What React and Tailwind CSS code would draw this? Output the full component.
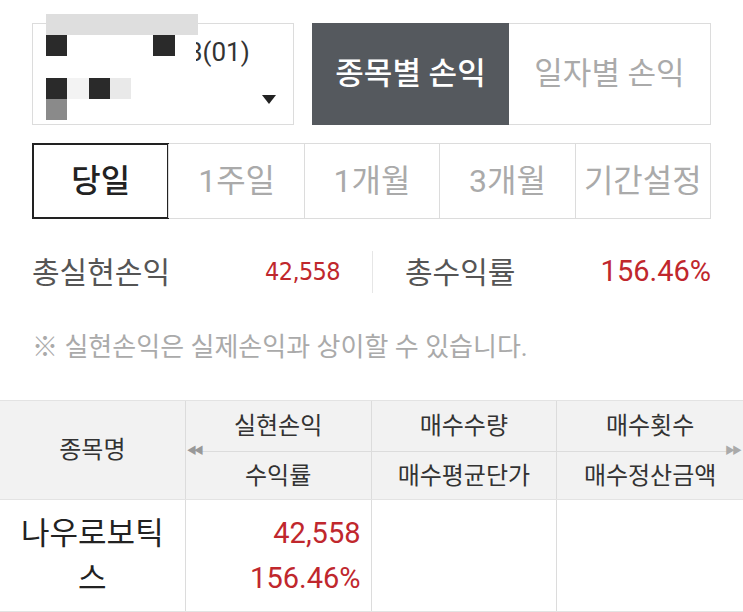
import { useState } from "react";

const font = { fontFamily: 'Roboto, "Noto Sans CJK KR", sans-serif' };

const periods = ["당일", "1주일", "1개월", "3개월", "기간설정"];

function AccountSelect() {
  return (
    <div className="relative w-[262px] h-[102px] border border-[#dcdcdc] bg-white shrink-0">
      <div className="pl-[155px] pt-[13px] text-[26px] leading-[30px] text-[#333]">3(01)</div>
      {/* 가려진 계좌번호 */}
      <div className="absolute left-[141px] top-[8px] w-[22px] h-[34px] bg-white" />
      <div className="absolute left-[13px] top-[-10px] w-[152px] h-[21px] bg-[#dedede]" />
      <div className="absolute left-[13px] top-[11px] w-[21px] h-[21px] bg-[#2a2a2a]" />
      <div className="absolute left-[120px] top-[11px] w-[22px] h-[21px] bg-[#2a2a2a]" />
      <div className="absolute left-[13px] top-[54px] w-[21px] h-[21px] bg-[#2a2a2a]" />
      <div className="absolute left-[34px] top-[54px] w-[22px] h-[21px] bg-[#f3f3f3]" />
      <div className="absolute left-[56px] top-[54px] w-[21px] h-[21px] bg-[#2a2a2a]" />
      <div className="absolute left-[77px] top-[54px] w-[21px] h-[21px] bg-[#e9e9e9]" />
      <div className="absolute left-[13px] top-[75px] w-[21px] h-[21px] bg-[#8a8a8a]" />
      <div className="absolute left-[229px] top-[71px] w-0 h-0 border-l-[7px] border-r-[7px] border-t-[9px] border-l-transparent border-r-transparent border-t-[#222]" />
    </div>
  );
}

export default function App() {
  const [view, setView] = useState("stock");
  const [period, setPeriod] = useState("당일");

  return (
    <div className="w-[743px] h-[612px] bg-white overflow-hidden" style={font}>
      <div className="px-[32px] pt-[23px]">
        <div className="flex gap-[18px]">
          <AccountSelect />
          <div className="flex flex-1 h-[102px]">
            <button
              onClick={() => setView("stock")}
              className={`w-[197px] text-[31px] ${view === "stock" ? "bg-[#55595e] text-white font-medium" : "bg-white text-[#aaa] border border-[#dcdcdc]"}`}
            >
              종목별 손익
            </button>
            <button
              onClick={() => setView("day")}
              className={`flex-1 text-[31px] ${view === "day" ? "bg-[#55595e] text-white font-medium" : "bg-white text-[#aaa] border border-[#dcdcdc] border-l-0"}`}
            >
              일자별 손익
            </button>
          </div>
        </div>

        <div className="grid grid-cols-5 h-[76px] mt-[18px] border border-[#dcdcdc]">
          {periods.map((p, i) => (
            <button
              key={p}
              onClick={() => setPeriod(p)}
              className={`text-[32px] ${
                period === p
                  ? "border-2 border-[#222] text-[#222] font-medium -m-px"
                  : `text-[#aaa] ${i > 0 ? "border-l border-[#dcdcdc]" : ""}`
              }`}
            >
              {p}
            </button>
          ))}
        </div>

        <div className="flex items-center h-[42px] mt-[32px]">
          <div className="flex items-center justify-between w-[308px]">
            <span className="text-[30px] text-[#555]">총실현손익</span>
            <span className="text-[25px] text-[#c0272d] tracking-tight" style={{ fontFamily: '"DejaVu Sans Condensed", "Liberation Sans Narrow", sans-serif' }}>
              42,558
            </span>
          </div>
          <div className="w-px h-[42px] bg-[#e6e6e6] mx-[32px]" />
          <div className="flex items-center justify-between flex-1">
            <span className="text-[30px] text-[#555]">총수익률</span>
            <span className="text-[29px] text-[#c0272d]">156.46%</span>
          </div>
        </div>

        <p className="mt-[39px] text-[26px] leading-[30px] text-[#aaa]">※ 실현손익은 실제손익과 상이할 수 있습니다.</p>
      </div>

      <div className="mt-[38px] border-t border-[#e3e3e3]">
        <div className="grid grid-cols-4 bg-[#f2f2f2] h-[98px] text-[24px] text-[#333]">
          <div className="flex items-center justify-center border-r border-[#dcdcdc]">종목명</div>
          <div className="col-span-3 relative flex flex-col">
            <div className="grid grid-cols-3 h-[50px]">
              <div className="flex items-center justify-center border-r border-[#dcdcdc]">실현손익</div>
              <div className="flex items-center justify-center border-r border-[#dcdcdc]">매수수량</div>
              <div className="flex items-center justify-center">매수횟수</div>
            </div>
            <div className="mx-[14px] h-px bg-[#dcdcdc]" />
            <div className="grid grid-cols-3 flex-1">
              <div className="flex items-center justify-center border-r border-[#dcdcdc]">수익률</div>
              <div className="flex items-center justify-center border-r border-[#dcdcdc]">매수평균단가</div>
              <div className="flex items-center justify-center">매수정산금액</div>
            </div>
            <span className="absolute left-[1px] top-[43px] text-[10px] leading-[14px] tracking-[-3px] text-[#999]">◀◀</span>
            <span className="absolute right-[4px] top-[43px] text-[10px] leading-[14px] tracking-[-3px] text-[#aaa]">▶▶</span>
          </div>
        </div>

        <div className="grid grid-cols-4 h-[113px] border-t border-b border-[#e3e3e3]">
          <div className="flex items-center justify-center border-r border-[#dcdcdc] px-[16px]">
            <span className="text-[31px] leading-[45px] text-[#222] text-center">나우로보틱스</span>
          </div>
          <div className="flex flex-col justify-center items-end pr-[10px] border-r border-[#dcdcdc] text-[29px] leading-[45px] text-[#c0272d]">
            <span>42,558</span>
            <span>156.46%</span>
          </div>
          <div className="border-r border-[#dcdcdc]" />
          <div />
        </div>
      </div>
    </div>
  );
}
